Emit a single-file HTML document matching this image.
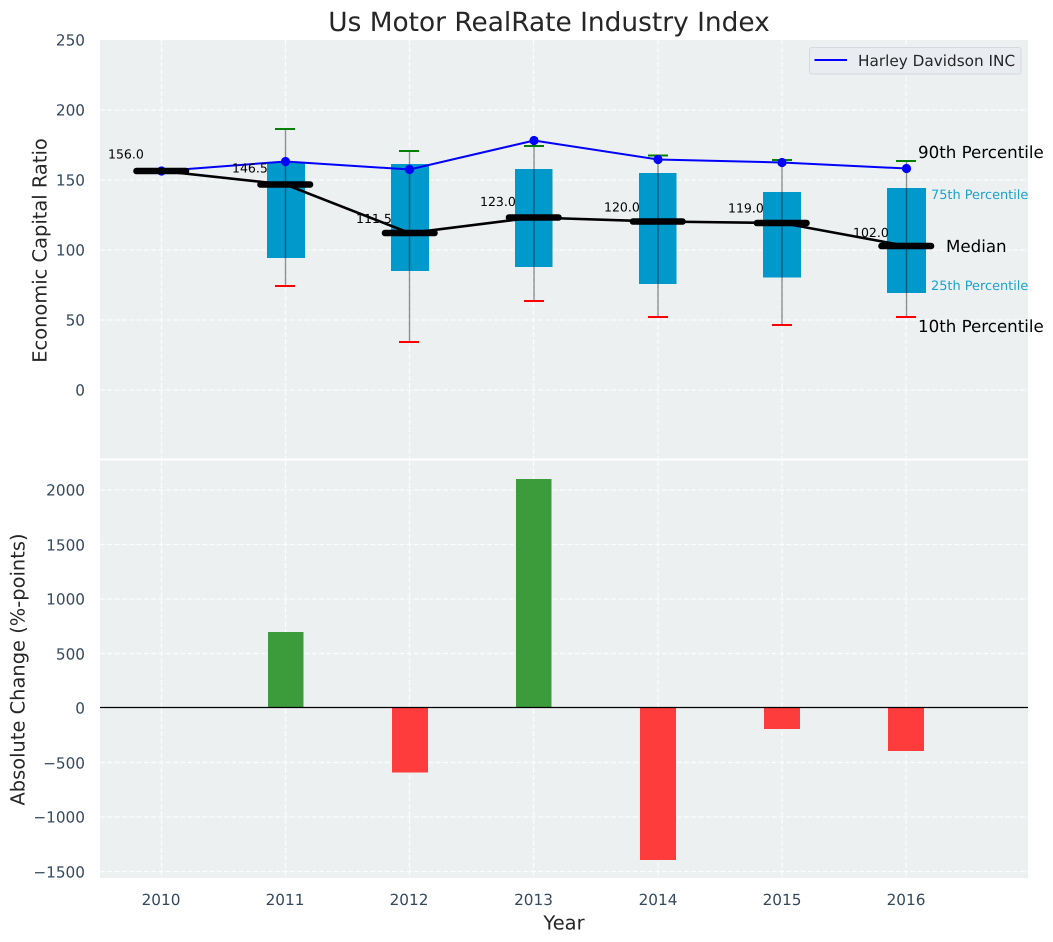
<!DOCTYPE html>
<html>
<head>
<meta charset="utf-8">
<style>
html,body{margin:0;padding:0;background:#fff;width:1053px;height:942px;overflow:hidden}
svg{display:block}
text{font-family:"DejaVu Sans","Liberation Sans",sans-serif;text-rendering:geometricPrecision}
.t{fill:#34495e;font-size:15.28px}
.g line{stroke:#fff;stroke-width:1.3;stroke-dasharray:5.1 2.2;opacity:.8}
.a{font-size:12.5px;fill:#000}
.p{font-size:16.67px;fill:#000}
.q{font-size:12.9px;fill:#1aa3d1}
</style>
</head>
<body>
<svg width="1053" height="942" viewBox="0 0 1053 942" xmlns="http://www.w3.org/2000/svg">
<rect width="1053" height="942" fill="#fff"/>
<rect x="100" y="40" width="928" height="418.5" fill="#ecf0f1"/>
<rect x="100" y="460.5" width="928" height="417.5" fill="#ecf0f1"/>

<g class="g">
<line x1="100" x2="1028" y1="110" y2="110"/><line x1="100" x2="1028" y1="180" y2="180"/><line x1="100" x2="1028" y1="250" y2="250"/><line x1="100" x2="1028" y1="320" y2="320"/><line x1="100" x2="1028" y1="390" y2="390"/>
<line x1="161.5" x2="161.5" y1="40" y2="458"/><line x1="285.5" x2="285.5" y1="40" y2="458"/><line x1="409.5" x2="409.5" y1="40" y2="458"/><line x1="533.5" x2="533.5" y1="40" y2="458"/><line x1="658" x2="658" y1="40" y2="458"/><line x1="782" x2="782" y1="40" y2="458"/><line x1="906" x2="906" y1="40" y2="458"/>
<line x1="100" x2="1028" y1="490" y2="490"/><line x1="100" x2="1028" y1="544.5" y2="544.5"/><line x1="100" x2="1028" y1="599" y2="599"/><line x1="100" x2="1028" y1="653.5" y2="653.5"/><line x1="100" x2="1028" y1="762.5" y2="762.5"/><line x1="100" x2="1028" y1="817" y2="817"/><line x1="100" x2="1028" y1="871.5" y2="871.5"/>
<line x1="161.5" x2="161.5" y1="461" y2="878"/><line x1="285.5" x2="285.5" y1="461" y2="878"/><line x1="409.5" x2="409.5" y1="461" y2="878"/><line x1="533.5" x2="533.5" y1="461" y2="878"/><line x1="658" x2="658" y1="461" y2="878"/><line x1="782" x2="782" y1="461" y2="878"/><line x1="906" x2="906" y1="461" y2="878"/>
</g>

<!-- boxes -->
<g fill="#0099cc">
<rect x="267" y="162" width="38" height="96"/>
<rect x="391" y="164" width="38" height="107"/>
<rect x="515" y="169" width="37.5" height="98"/>
<rect x="639" y="173" width="37.5" height="111"/>
<rect x="763" y="192" width="38" height="85.5"/>
<rect x="887" y="188" width="39" height="105"/>
</g>

<!-- whiskers -->
<g stroke="#000" stroke-opacity=".42" stroke-width="1.4">
<line x1="285.5" x2="285.5" y1="129" y2="286"/>
<line x1="409.5" x2="409.5" y1="151" y2="342"/>
<line x1="534" x2="534" y1="146" y2="301"/>
<line x1="658" x2="658" y1="155.5" y2="317"/>
<line x1="782" x2="782" y1="160" y2="325"/>
<line x1="906.5" x2="906.5" y1="161" y2="317"/>
</g>
<g stroke="#008000" stroke-width="2">
<line x1="275" x2="295" y1="129" y2="129"/>
<line x1="399" x2="419" y1="151" y2="151"/>
<line x1="524" x2="544" y1="146" y2="146"/>
<line x1="648" x2="668" y1="155.5" y2="155.5"/>
<line x1="772" x2="792" y1="160" y2="160"/>
<line x1="896" x2="916" y1="161" y2="161"/>
</g>
<g stroke="#f00" stroke-width="2">
<line x1="275" x2="295" y1="286" y2="286"/>
<line x1="399" x2="419" y1="342" y2="342"/>
<line x1="524" x2="544" y1="301" y2="301"/>
<line x1="648" x2="668" y1="317" y2="317"/>
<line x1="772" x2="792" y1="325" y2="325"/>
<line x1="896" x2="916" y1="317" y2="317"/>
</g>

<!-- blue line -->
<polyline points="161.5,171 285.5,161.5 409.5,169.5 534,140.5 658,159.5 782,162.5 906.5,168.5" fill="none" stroke="#0000ff" stroke-width="2"/>
<g fill="#0000ff">
<circle cx="161.5" cy="171" r="4.6"/><circle cx="285.5" cy="161.5" r="4.6"/><circle cx="409.5" cy="169.5" r="4.6"/><circle cx="534" cy="140.5" r="4.6"/><circle cx="658" cy="159.5" r="4.6"/><circle cx="782" cy="162.5" r="4.6"/><circle cx="906.5" cy="168.5" r="4.6"/>
</g>

<!-- medians -->
<polyline points="161.5,171 285.5,184.5 409.5,233 534,217.5 658,221.5 782,223 906.5,246" fill="none" stroke="#000" stroke-width="2.6"/>
<g stroke="#000" stroke-width="6.6" stroke-linecap="round">
<line x1="136.5" x2="186" y1="171" y2="171"/>
<line x1="260.5" x2="310" y1="184.5" y2="184.5"/>
<line x1="385" x2="434.5" y1="233" y2="233"/>
<line x1="509" x2="558.5" y1="217.5" y2="217.5"/>
<line x1="633" x2="682.5" y1="221.5" y2="221.5"/>
<line x1="757" x2="806.5" y1="223" y2="223"/>
<line x1="881.5" x2="931" y1="246" y2="246"/>
</g>

<!-- value labels -->
<text class="a" x="108" y="158.5">156.0</text>
<text class="a" x="232" y="172.5">146.5</text>
<text class="a" x="356" y="223">111.5</text>
<text class="a" x="480" y="206">123.0</text>
<text class="a" x="604" y="211.5">120.0</text>
<text class="a" x="728" y="212.5">119.0</text>
<text class="a" x="853" y="237">102.0</text>

<!-- percentile labels -->
<text class="p" x="918" y="158">90th Percentile</text>
<text class="p" x="918" y="332">10th Percentile</text>
<text class="p" x="946" y="252">Median</text>
<text class="q" x="931" y="199">75th Percentile</text>
<text class="q" x="931" y="290">25th Percentile</text>

<!-- legend -->
<rect x="809.5" y="47.5" width="211.5" height="26.5" rx="2.5" fill="#e9ecf1" stroke="#d5d8dc" stroke-width="1"/>
<line x1="814.5" x2="847" y1="60" y2="60" stroke="#0000ff" stroke-width="2"/>
<text x="858" y="66" font-size="15.28" fill="#262626">Harley Davidson INC</text>

<!-- bars -->
<rect x="268" y="632" width="35.5" height="76" fill="#3c9c3c"/>
<rect x="516" y="479" width="35.5" height="229" fill="#3c9c3c"/>
<rect x="392" y="708" width="36" height="64.5" fill="#ff3c3c"/>
<rect x="640" y="708" width="36" height="152" fill="#ff3c3c"/>
<rect x="764" y="708" width="36" height="21" fill="#ff3c3c"/>
<rect x="888" y="708" width="36" height="43" fill="#ff3c3c"/>
<line x1="100" x2="1028" y1="707.5" y2="707.5" stroke="#000" stroke-width="1.3"/>

<!-- tick labels -->
<g text-anchor="end">
<text class="t" x="85" y="45.5">250</text>
<text class="t" x="85" y="115.5">200</text>
<text class="t" x="85" y="185.5">150</text>
<text class="t" x="85" y="255.5">100</text>
<text class="t" x="85" y="325.5">50</text>
<text class="t" x="85" y="395.5">0</text>
<text class="t" x="85" y="495.5">2000</text>
<text class="t" x="85" y="550.5">1500</text>
<text class="t" x="85" y="604.5">1000</text>
<text class="t" x="85" y="659.5">500</text>
<text class="t" x="85" y="713.5">0</text>
<text class="t" x="85" y="768.5">−500</text>
<text class="t" x="85" y="822.5">−1000</text>
<text class="t" x="85" y="877.5">−1500</text>
</g>
<g text-anchor="middle">
<text class="t" x="161" y="905">2010</text>
<text class="t" x="285" y="905">2011</text>
<text class="t" x="409" y="905">2012</text>
<text class="t" x="533.5" y="905">2013</text>
<text class="t" x="658" y="905">2014</text>
<text class="t" x="782" y="905">2015</text>
<text class="t" x="906" y="905">2016</text>
</g>

<!-- titles -->
<text x="549" y="31" text-anchor="middle" font-size="26.4" fill="#262626">Us Motor RealRate Industry Index</text>
<text x="564" y="929.5" text-anchor="middle" font-size="19.44" fill="#262626">Year</text>
<text transform="translate(46.5,250.5) rotate(-90)" text-anchor="middle" font-size="19.44" fill="#262626">Economic Capital Ratio</text>
<text transform="translate(24.5,669.5) rotate(-90)" text-anchor="middle" font-size="19.44" fill="#262626">Absolute Change (%-points)</text>
</svg>
</body>
</html>
